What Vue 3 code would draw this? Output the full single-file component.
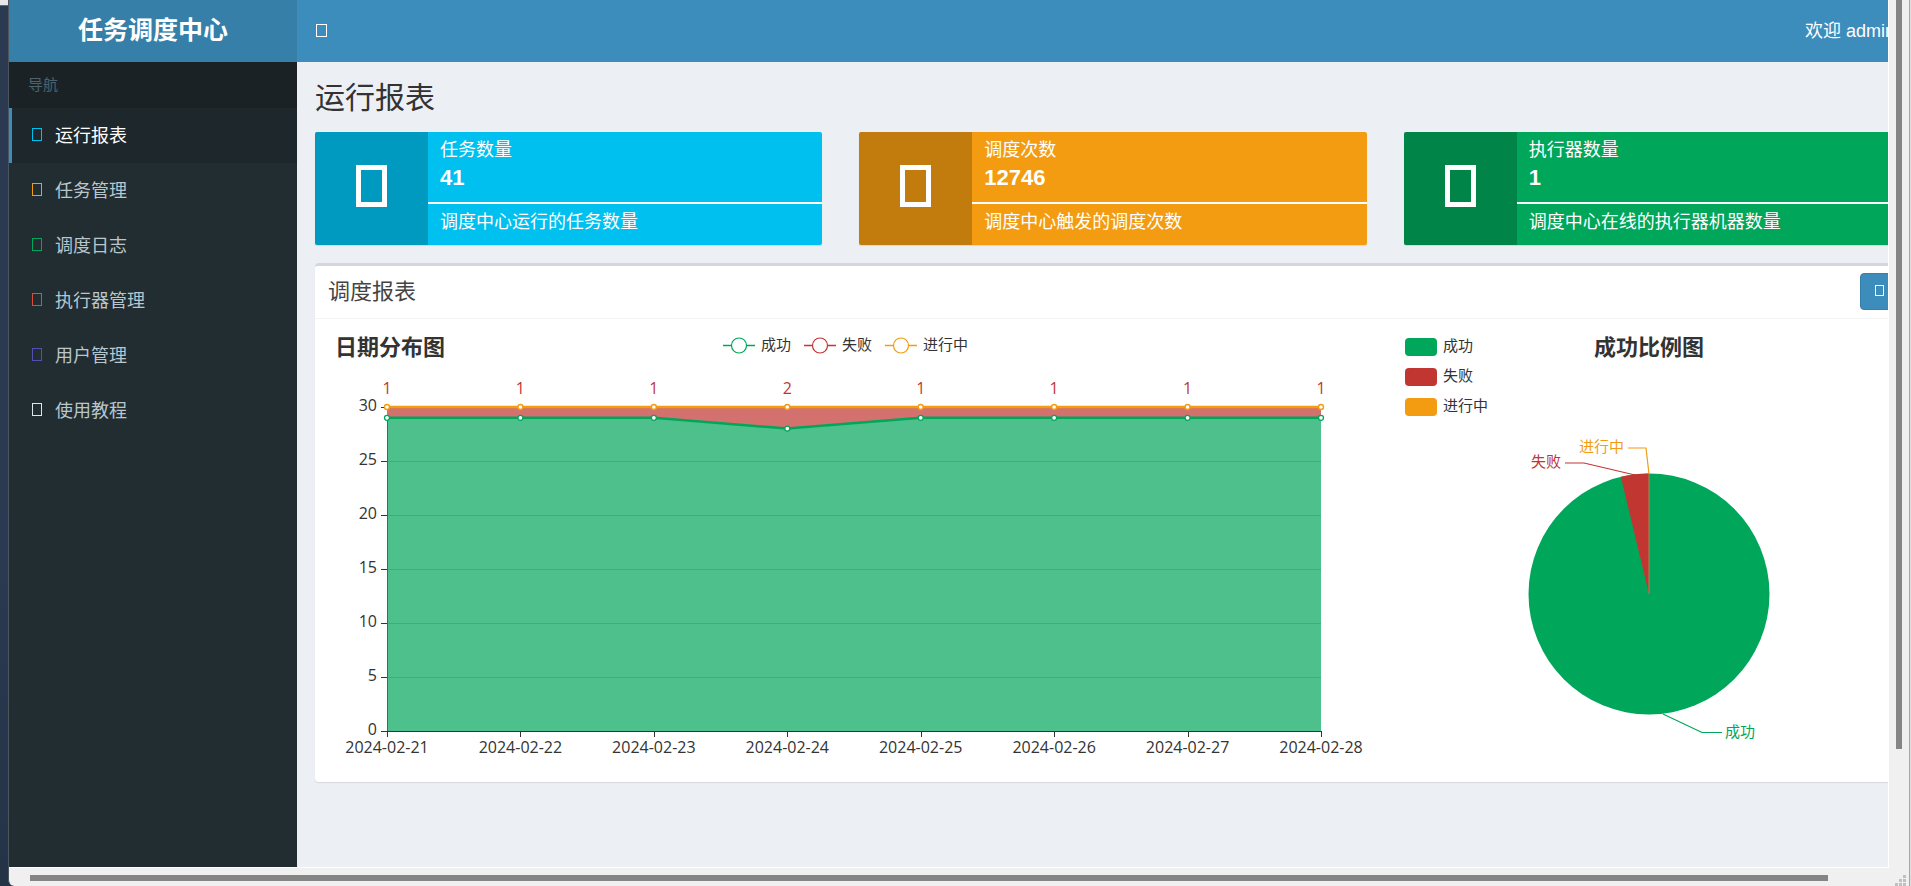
<script setup>
const menu = [
  { label: '运行报表', tone: 'aqua', active: true },
  { label: '任务管理', tone: 'yellow' },
  { label: '调度日志', tone: 'green' },
  { label: '执行器管理', tone: 'red' },
  { label: '用户管理', tone: 'purple' },
  { label: '使用教程', tone: 'plain' }
]

const cards = [
  { title: '任务数量', value: '41', note: '调度中心运行的任务数量', tone: 'bg-aqua' },
  { title: '调度次数', value: '12746', note: '调度中心触发的调度次数', tone: 'bg-yellow' },
  { title: '执行器数量', value: '1', note: '调度中心在线的执行器机器数量', tone: 'bg-green' }
]

const GREEN = '#00a65a'
const RED = '#c23632'
const ORANGE = '#f39c12'

// Line chart geometry
const left = 72
const right = 1006
const base = 412
const top = 88
const yOf = (v) => base - (v * (base - top)) / 30
const days = [
  ['2024-02-21', 29, 1],
  ['2024-02-22', 29, 1],
  ['2024-02-23', 29, 1],
  ['2024-02-24', 28, 2],
  ['2024-02-25', 29, 1],
  ['2024-02-26', 29, 1],
  ['2024-02-27', 29, 1],
  ['2024-02-28', 29, 1]
].map(([date, ok, fail], i) => ({
  date,
  fail,
  x: left + (i * (right - left)) / 7,
  yOk: yOf(ok),
  yAll: yOf(ok + fail)
}))
const okLine = days.map((d) => `${d.x},${d.yOk}`).join(' ')
const allLine = days.map((d) => `${d.x},${d.yAll}`).join(' ')
const okArea = `${okLine} ${right},${base} ${left},${base}`
const failArea = `${allLine} ${[...days].reverse().map((d) => `${d.x},${d.yOk}`).join(' ')}`
const ticks = [0, 5, 10, 15, 20, 25, 30]
const lineLegend = [
  { label: '成功', x: 408, color: GREEN },
  { label: '失败', x: 489, color: RED },
  { label: '进行中', x: 570, color: ORANGE }
]

// Pie geometry
const cx = 249
const cy = 275
const r = 120.5
const a = (Math.PI * 2 * 9) / 240
const failSlice = `M${cx} ${cy}L${cx - r * Math.sin(a)} ${cy - r * Math.cos(a)}A${r} ${r} 0 0 1 ${cx} ${cy - r}Z`
const pieLegend = [
  { label: '成功', y: 28, color: GREEN },
  { label: '失败', y: 58, color: RED },
  { label: '进行中', y: 88, color: ORANGE }
]
</script>

<template>
  <div class="desktop">
    <div class="edge-left"></div>
    <div class="window">
      <div class="viewport">
        <div class="page">
          <aside class="sidebar">
            <a class="logo" href="#">任务调度中心</a>
            <div class="nav-head">导航</div>
            <nav>
              <a v-for="m in menu" :key="m.label" href="#" class="nav-item" :class="{ active: m.active }">
                <svg class="glyph" :class="m.tone" width="10" height="13" aria-hidden="true">
                  <rect x="0.5" y="0.5" width="9" height="12" />
                </svg>
                <span>{{ m.label }}</span>
              </a>
            </nav>
          </aside>
          <div class="main">
            <header class="topbar">
              <button class="toggle" type="button" aria-label="切换导航">
                <svg class="glyph" width="11" height="13" aria-hidden="true">
                  <rect x="0.5" y="0.5" width="10" height="12" />
                </svg>
              </button>
              <a class="user" href="#">欢迎 admin</a>
            </header>
            <main class="content">
              <h1>运行报表</h1>
              <div class="cards">
                <section v-for="c in cards" :key="c.title" class="card" :class="c.tone">
                  <div class="card-icon">
                    <svg class="glyph-lg" width="31" height="42" aria-hidden="true">
                      <rect x="2.5" y="2.5" width="26" height="37" />
                    </svg>
                  </div>
                  <div class="card-body">
                    <div class="card-title">{{ c.title }}</div>
                    <div class="card-value">{{ c.value }}</div>
                    <div class="card-bar"></div>
                    <div class="card-note">{{ c.note }}</div>
                  </div>
                </section>
              </div>

              <section class="box">
                <div class="box-head">
                  <h2>调度报表</h2>
                  <button class="range" type="button" aria-label="选择日期范围">
                    <svg class="glyph" width="9" height="11" aria-hidden="true">
                      <rect x="0.5" y="0.5" width="8" height="10" />
                    </svg>
                  </button>
                </div>
                <div class="charts">
                  <svg class="chart" viewBox="0 0 1085 463" role="img" aria-label="日期分布图">
                    <text class="chart-title" x="20" y="36">日期分布图</text>
                    <g v-for="l in lineLegend" :key="l.label">
                      <line :x1="l.x" :x2="l.x + 32" y1="26.5" y2="26.5" :stroke="l.color" stroke-width="1.5" />
                      <circle :cx="l.x + 16" cy="26.5" r="7.5" fill="#fff" :stroke="l.color" stroke-width="1.2" />
                      <text class="small" :x="l.x + 38" y="31">{{ l.label }}</text>
                    </g>
                    <g stroke="#333" stroke-width="1">
                      <line v-for="t in ticks" :key="t" :x1="left - 6" :x2="left" :y1="Math.round(yOf(t)) + 0.5" :y2="Math.round(yOf(t)) + 0.5" />
                      <line v-for="d in days" :key="d.date" :x1="Math.round(d.x) + 0.5" :x2="Math.round(d.x) + 0.5" :y1="base" :y2="base + 6" />
                      <line :x1="left + 0.5" :x2="left + 0.5" :y1="top" :y2="base" />
                      <line :x1="left" :x2="right" :y1="base + 0.5" :y2="base + 0.5" />
                    </g>
                    <polygon :points="okArea" fill="#4dc08b" />
                    <polygon :points="failArea" fill="#d2716d" />
                    <g stroke="#3fae7c" stroke-width="1">
                      <line v-for="t in ticks.slice(1, 6)" :key="t" :x1="left" :x2="right" :y1="Math.round(yOf(t)) + 0.5" :y2="Math.round(yOf(t)) + 0.5" />
                    </g>
                    <g stroke="#1c7f50" stroke-width="1">
                      <line :x1="left + 0.5" :x2="left + 0.5" :y1="days[0].yOk" :y2="base" />
                    </g>
                    <polyline :points="okLine" fill="none" :stroke="GREEN" stroke-width="2.5" />
                    <polyline :points="allLine" fill="none" :stroke="ORANGE" stroke-width="2.5" />
                    <g v-for="d in days" :key="d.date">
                      <circle :cx="d.x" :cy="d.yOk" r="2.5" fill="#fff" :stroke="GREEN" stroke-width="1.3" />
                      <circle :cx="d.x" :cy="d.yAll" r="2.5" fill="#fff" :stroke="ORANGE" stroke-width="1.4" />
                      <text class="num fail" :x="d.x" y="75" text-anchor="middle">{{ d.fail }}</text>
                      <text class="num" :x="d.x" y="434" text-anchor="middle">{{ d.date }}</text>
                    </g>
                    <text v-for="t in ticks" :key="t" class="num" x="62" :y="yOf(t) + 4" text-anchor="end">{{ t }}</text>
                  </svg>

                  <svg class="chart" viewBox="0 0 511 463" role="img" aria-label="成功比例图">
                    <g v-for="l in pieLegend" :key="l.label">
                      <rect x="5" :y="l.y - 9" width="32" height="18" rx="4" :fill="l.color" />
                      <text class="small" x="43" :y="l.y + 4">{{ l.label }}</text>
                    </g>
                    <text class="chart-title" x="249" y="36" text-anchor="middle">成功比例图</text>
                    <circle :cx="cx" :cy="cy" :r="r" :fill="GREEN" />
                    <path :d="failSlice" :fill="RED" />
                    <line :x1="cx" :x2="cx" :y1="cy - r" :y2="cy" stroke="#a08a55" stroke-width="1" />
                    <g fill="none" stroke-width="1.2">
                      <polyline points="249,155 246,129 228,129" :stroke="ORANGE" />
                      <polyline points="235,156 184,144 165,144" :stroke="RED" />
                      <polyline points="263,395 302,413.5 322,413.5" :stroke="GREEN" />
                    </g>
                    <text class="small" x="224" y="133" text-anchor="end" :style="{ fill: ORANGE }">进行中</text>
                    <text class="small" x="161" y="148" text-anchor="end" :style="{ fill: RED }">失败</text>
                    <text class="small" x="325" y="418" :style="{ fill: GREEN }">成功</text>
                  </svg>
                </div>
              </section>
            </main>
          </div>
        </div>
      </div>
      <div class="track-v"><div class="thumb-v"></div></div>
      <div class="track-h"><div class="thumb-h"></div></div>
      <svg class="grip" viewBox="0 0 20 18" aria-hidden="true">
        <path fill="#c0c0c0" d="M14 7h3v3h-3zM10 11h3v3h-3zM14 11h3v3h-3zM6 15h3v3H6zM10 15h3v3h-3zM14 15h3v3h-3z" />
      </svg>
    </div>
    <div class="edge-right"></div>
  </div>
</template>

<style>
body {
  margin: 0;
  overflow: hidden;
}
</style>

<style scoped>
.desktop {
  display: grid;
  grid-template-columns: 8px minmax(0, 1fr) 2px;
  height: 100vh;
  background: #253347;
  color: #333;
  font-family: "Liberation Sans", "Noto Sans CJK SC", sans-serif;
  font-size: 18px;
}
.desktop *,
.desktop {
  box-sizing: border-box;
}
.edge-left {
  background: linear-gradient(#e8e8e8 5px, #9a9a9a 5px, #2b3a50 6px, #2b3a52 60%, #253347);
}
.edge-right {
  background: linear-gradient(90deg, #a8a8a8 50%, #dcdcdc 50%);
}
.window {
  display: grid;
  grid-template-columns: minmax(0, 1fr) 20px;
  grid-template-rows: minmax(0, 1fr) 18px;
  border-left: 1px solid #4b5560;
  border-bottom-left-radius: 6px;
  background: #f0f0f0;
  overflow: hidden;
}
.viewport {
  overflow: hidden;
  border-right: 1px solid #fff;
  border-bottom: 1px solid #fff;
  background: #ecf0f5;
}
.page {
  display: grid;
  grid-template-columns: 288px minmax(0, 1fr);
  width: calc(100% + 42px);
  min-height: 100%;
  background: #ecf0f5;
}
.sidebar {
  background: #222d32;
}
.logo {
  display: block;
  height: 62px;
  line-height: 60px;
  background: #367fa9;
  color: #fff;
  font-size: 25px;
  font-weight: 700;
  text-align: center;
  text-decoration: none;
}
.nav-head {
  height: 46px;
  padding-left: 19px;
  line-height: 46px;
  background: #1a2226;
  color: #4b646f;
  font-size: 15px;
}
.nav-item {
  display: flex;
  align-items: center;
  gap: 13px;
  height: 55px;
  padding: 0 0 4px 20px;
  border-left: 3px solid transparent;
  color: #b8c7ce;
  text-decoration: none;
}
.nav-item.active {
  border-left-color: #3c8dbc;
  background: #1e282c;
  color: #fff;
}
.glyph,
.glyph-lg {
  display: block;
  fill: none;
  stroke: currentColor;
}
.nav-item .glyph {
  margin-top: 2px;
}
.glyph-lg {
  stroke-width: 5px;
}
.aqua { color: #00c0ef; }
.yellow { color: #f39c12; }
.green { color: #00a65a; }
.red { color: #dd4b39; }
.purple { color: #5350b4; }
.plain { color: #dfe6ea; }

.topbar {
  display: flex;
  align-items: center;
  justify-content: space-between;
  height: 62px;
  padding: 0 35px 4px 19px;
  background: #3c8dbc;
  color: #fff;
}
.toggle {
  padding: 2px 0 0;
  border: 0;
  background: none;
  color: #fff;
}
.user {
  color: #fff;
  text-decoration: none;
}
.content {
  padding: 17px 19px 0 18px;
}
h1 {
  margin: 0;
  font-size: 30px;
  font-weight: 400;
  line-height: 38px;
}
.cards {
  display: grid;
  grid-template-columns: repeat(3, minmax(0, 1fr));
  gap: 37px;
  margin-top: 15px;
}
.card {
  display: flex;
  height: 113px;
  border-radius: 2px;
  overflow: hidden;
  color: #fff;
  box-shadow: 0 1px 1px rgba(0, 0, 0, 0.1);
}
.bg-aqua { background: #00c0ef; }
.bg-yellow { background: #f39c12; }
.bg-green { background: #00a65a; }
.card-icon {
  display: flex;
  align-items: center;
  justify-content: center;
  width: 113px;
  padding-bottom: 5px;
  background: rgba(0, 0, 0, 0.2);
}
.card-body {
  flex: 1;
  padding-top: 5px;
}
.card-title,
.card-value,
.card-note {
  padding-left: 12px;
}
.card-title {
  line-height: 26px;
}
.card-value {
  font-size: 22px;
  font-weight: 700;
  line-height: 30px;
}
.card-bar {
  height: 2px;
  margin: 9px 0 5px;
  background: #fff;
}
.card-note {
  line-height: 26px;
}
.box {
  margin-top: 18px;
  border-top: 3px solid #d2d6de;
  border-radius: 4px;
  background: #fff;
  box-shadow: 0 1px 1px rgba(0, 0, 0, 0.1);
}
.box-head {
  display: flex;
  align-items: center;
  justify-content: space-between;
  height: 53px;
  padding: 0 12px 2px 13px;
  border-bottom: 1px solid #f4f4f4;
}
h2 {
  margin: 0;
  padding-bottom: 4px;
  color: #444;
  font-size: 22px;
  font-weight: 400;
}
.range {
  display: flex;
  align-items: center;
  width: 39px;
  height: 37px;
  padding: 0 14px 2px;
  border: 1px solid #367fa9;
  border-radius: 4px;
  background: #3c8dbc;
  color: #fff;
}
.charts {
  display: grid;
  grid-template-columns: minmax(0, 1085fr) minmax(0, 511fr);
}
.chart {
  display: block;
  width: 100%;
}
.chart-title {
  fill: #333;
  font-size: 22px;
  font-weight: 700;
}
.small {
  fill: #333;
  font-size: 15px;
}
.num {
  fill: #333;
  font-family: "Open Sans", "Noto Sans", sans-serif;
  font-size: 16px;
}
.num.fail {
  fill: #c23632;
}
.track-v {
  grid-column: 2;
  grid-row: 1;
  padding-left: 7px;
}
.thumb-v {
  width: 6px;
  height: calc(100% - 119px);
  background: #858585;
}
.track-h {
  grid-column: 1;
  grid-row: 2;
  padding: 7px 61px 0 21px;
}
.thumb-h {
  height: 6px;
  background: #858585;
}
.grip {
  grid-column: 2;
  grid-row: 2;
  width: 20px;
  height: 18px;
}
</style>
